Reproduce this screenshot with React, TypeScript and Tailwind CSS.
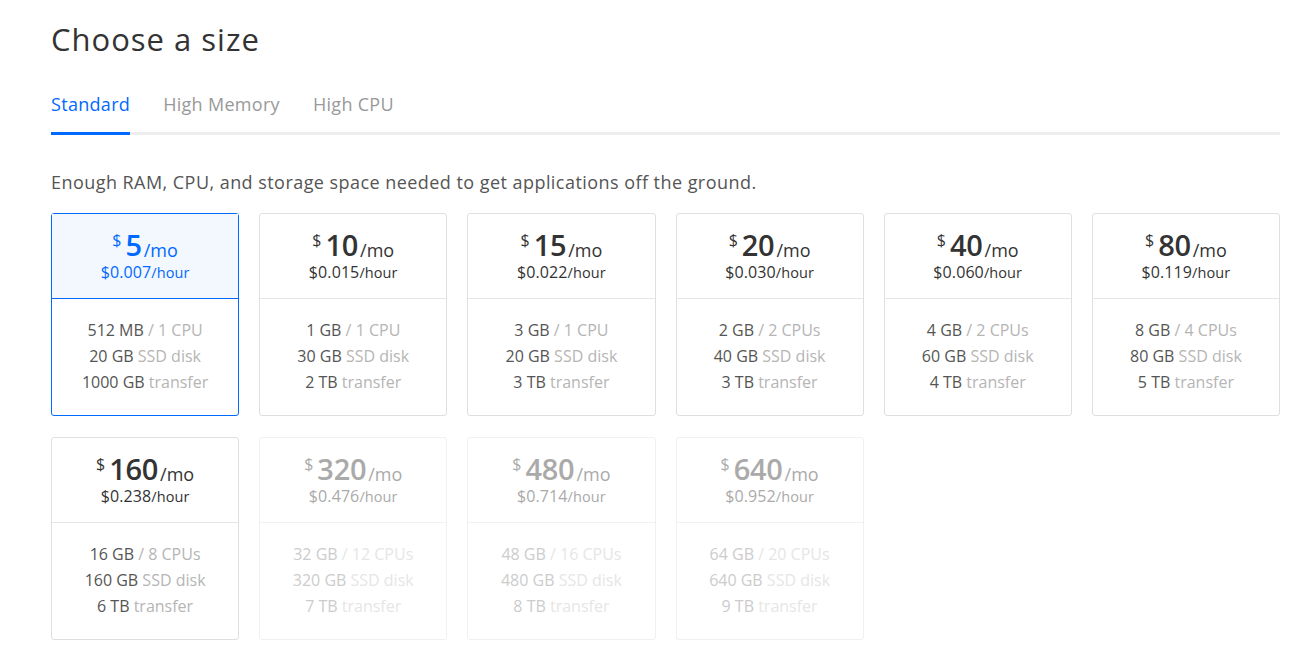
import React, { useState } from 'react';

type Plan = {
  mo: number;
  hour: string;
  ram: string;
  cpu: string;
  disk: string;
  transfer: string;
  disabled?: boolean;
};

const plans: Plan[] = [
  { mo: 5, hour: '$0.007', ram: '512 MB', cpu: '1 CPU', disk: '20 GB', transfer: '1000 GB' },
  { mo: 10, hour: '$0.015', ram: '1 GB', cpu: '1 CPU', disk: '30 GB', transfer: '2 TB' },
  { mo: 15, hour: '$0.022', ram: '3 GB', cpu: '1 CPU', disk: '20 GB', transfer: '3 TB' },
  { mo: 20, hour: '$0.030', ram: '2 GB', cpu: '2 CPUs', disk: '40 GB', transfer: '3 TB' },
  { mo: 40, hour: '$0.060', ram: '4 GB', cpu: '2 CPUs', disk: '60 GB', transfer: '4 TB' },
  { mo: 80, hour: '$0.119', ram: '8 GB', cpu: '4 CPUs', disk: '80 GB', transfer: '5 TB' },
  { mo: 160, hour: '$0.238', ram: '16 GB', cpu: '8 CPUs', disk: '160 GB', transfer: '6 TB' },
  { mo: 320, hour: '$0.476', ram: '32 GB', cpu: '12 CPUs', disk: '320 GB', transfer: '7 TB', disabled: true },
  { mo: 480, hour: '$0.714', ram: '48 GB', cpu: '16 CPUs', disk: '480 GB', transfer: '8 TB', disabled: true },
  { mo: 640, hour: '$0.952', ram: '64 GB', cpu: '20 CPUs', disk: '640 GB', transfer: '9 TB', disabled: true },
];

const tabs = ['Standard', 'High Memory', 'High CPU'];

const PlanCard: React.FC<{ plan: Plan; selected: boolean; onSelect: () => void }> = ({ plan, selected, onSelect }) => {
  const { disabled } = plan;
  const border = selected ? 'border-[#0069ff]' : disabled ? 'border-[#f0f0f0]' : 'border-[#dfdfdf]';
  const strong = selected ? 'text-[#0069ff]' : disabled ? 'text-[#aaaaaa]' : 'text-[#333]';
  const spec = disabled ? 'text-[#cccccc]' : 'text-[#555]';
  const muted = disabled ? 'text-[#e6e6e6]' : 'text-[#b5b5b5]';

  return (
    <button
      onClick={disabled ? undefined : onSelect}
      className={`flex h-[203px] flex-col rounded-[3px] border bg-white text-center ${border} ${disabled ? 'cursor-default' : 'cursor-pointer'}`}
    >
      <div
        className={`flex h-[85px] w-full flex-col items-center justify-center border-b ${selected ? 'border-[#0069ff] bg-[#f3f8ff]' : disabled ? 'border-[#f2f2f2]' : 'border-[#e6e6e6]'} ${strong}`}
      >
        <div className="flex h-[28px] items-start">
          <span className="mr-[4px] mt-[1px] text-[16px] leading-[16px]">$</span>
          <span className="text-[29px] font-semibold leading-[28px] tracking-[-0.3px]">{plan.mo}</span>
          <span className="ml-[2px] mt-[10px] text-[18px] leading-[18px]">/mo</span>
        </div>
        <div className="mt-[4px] text-[14.5px] leading-[18px] tracking-[0.1px]">
          <span className="text-[16px]">{plan.hour}</span>/hour
        </div>
      </div>
      <div className="flex w-full flex-1 flex-col items-center justify-center pb-[3px] text-[16px] leading-[26px]">
        <div>
          <span className={spec}>{plan.ram}</span>
          <span className={muted}> / {plan.cpu}</span>
        </div>
        <div>
          <span className={spec}>{plan.disk}</span>
          <span className={muted}> SSD disk</span>
        </div>
        <div>
          <span className={spec}>{plan.transfer}</span>
          <span className={muted}> transfer</span>
        </div>
      </div>
    </button>
  );
};

export default function App() {
  const [tab, setTab] = useState(0);
  const [selected, setSelected] = useState(0);

  return (
    <div className="min-h-screen bg-white font-['Open_Sans','Lato',sans-serif] text-[#333]">
      <div className="w-[1280px] pl-[51px] pt-[18px]">
        <h1 className="text-[31px] leading-[42px] tracking-[1px] text-[#333]">Choose a size</h1>

        <div className="mt-[33px] flex border-b-[3px] border-[#eeeeee]">
          {tabs.map((t, i) => (
            <button
              key={t}
              onClick={() => setTab(i)}
              className={`-mb-[3px] mr-[33px] border-b-[3px] pb-[17px] text-[18px] leading-[22px] tracking-[0.3px] ${
                tab === i ? 'border-[#0069ff] text-[#0069ff]' : 'border-transparent text-[#999]'
              }`}
            >
              {t}
            </button>
          ))}
        </div>

        <p className="mt-[35px] text-[18px] leading-[24px] tracking-[0.45px] text-[#555]">
          Enough RAM, CPU, and storage space needed to get applications off the ground.
        </p>

        <div className="mt-[19px] grid grid-cols-6 gap-x-[20px] gap-y-[21px]">
          {plans.map((p, i) => (
            <PlanCard key={p.mo} plan={p} selected={selected === i} onSelect={() => setSelected(i)} />
          ))}
        </div>
      </div>
    </div>
  );
}
